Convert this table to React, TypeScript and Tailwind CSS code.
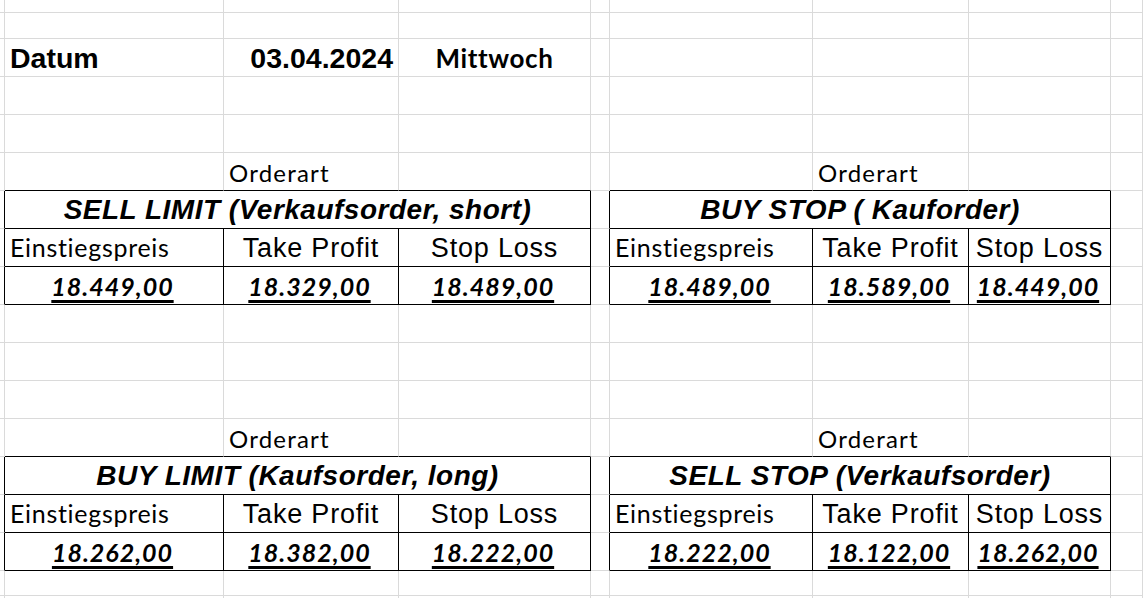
import type { ReactNode } from "react";

type Table = {
  top: number;
  left: number;
  title: string;
  values: [string, string, string];
};

const tables: Table[] = [
  { top: 6, left: 1, title: "SELL LIMIT (Verkaufsorder, short)", values: ["18.449,00", "18.329,00", "18.489,00"] },
  { top: 6, left: 5, title: "BUY STOP ( Kauforder)", values: ["18.489,00", "18.589,00", "18.449,00"] },
  { top: 13, left: 1, title: "BUY LIMIT (Kaufsorder, long)", values: ["18.262,00", "18.382,00", "18.222,00"] },
  { top: 13, left: 5, title: "SELL STOP (Verkaufsorder)", values: ["18.222,00", "18.122,00", "18.262,00"] },
];

const ROWS = 18;
const COLS = 9;

const owner = (r: number, c: number): string | null => {
  for (let i = 0; i < tables.length; i++) {
    const t = tables[i];
    if (r >= t.top && r <= t.top + 2 && c >= t.left && c <= t.left + 2) {
      return r === t.top ? `${i}-title` : `${i}-${r}-${c}`;
    }
  }
  return null;
};

const arial = "font-['Liberation_Sans',Arial,sans-serif] leading-none text-black";
const calibri = "font-['Lato','Noto_Sans',sans-serif] leading-none text-black";

const Orderart = () => (
  <span className={`${calibri} text-[24px] tracking-[1.2px] pl-[5px] pb-[5px]`}>Orderart</span>
);

// returns content and justify class for one cell
const cellContent = (r: number, c: number): { node: ReactNode; justify: string } | null => {
  if (r === 2 && c === 1)
    return {
      node: <span className={`${arial} font-bold text-[28.5px] pl-[5px] pb-[4px]`}>Datum</span>,
      justify: "justify-start",
    };
  if (r === 2 && c === 2)
    return {
      node: <span className={`${arial} font-bold text-[28.5px] pr-[5px] pb-[4px]`}>03.04.2024</span>,
      justify: "justify-end",
    };
  if (r === 2 && c === 3)
    return {
      node: <span className={`${calibri} font-bold text-[26px] tracking-[0.6px] pb-[5px]`}>Mittwoch</span>,
      justify: "justify-center",
    };
  if ((r === 5 || r === 12) && (c === 2 || c === 6)) return { node: <Orderart />, justify: "justify-start" };

  for (const t of tables) {
    if (c < t.left || c > t.left + 2) continue;
    const k = c - t.left;
    if (r === t.top && k === 0)
      return {
        node: (
          <span className={`${arial} font-bold italic text-[28px] tracking-[0.5px] pb-[4px]`}>{t.title}</span>
        ),
        justify: "justify-center",
      };
    if (r === t.top + 1) {
      if (k === 0)
        return {
          node: <span className={`${calibri} text-[25px] tracking-[0.7px] pl-[5px] pb-[6px]`}>Einstiegspreis</span>,
          justify: "justify-start",
        };
      return {
        node: (
          <span className={`${arial} text-[27px] tracking-[0.8px] pb-[4px]`}>
            {k === 1 ? "Take Profit" : "Stop Loss"}
          </span>
        ),
        justify: "justify-center",
      };
    }
    if (r === t.top + 2)
      return {
        node: (
          <span
            className={`${calibri} font-bold italic text-[25px] tracking-[1px] underline decoration-[3px] underline-offset-[4px] pr-[3px] pb-[5px]`}
          >
            {t.values[k]}
          </span>
        ),
        justify: "justify-center",
      };
  }
  return null;
};

const App = () => {
  const cells: ReactNode[] = [];

  for (let r = 0; r < ROWS; r++) {
    for (let c = 0; c < COLS; c++) {
      const o = owner(r, c);
      const isTitle = o !== null && o.endsWith("title");
      // skip cells covered by a merged title
      if (isTitle && owner(r, c - 1) === o) continue;
      const span = isTitle ? 3 : 1;
      const ro = c + span < COLS ? owner(r, c + span) : null;
      const bo = r + 1 < ROWS ? owner(r + 1, c) : null;
      const rightBlack = (o || ro) && o !== ro;
      const bottomBlack = (o || bo) && o !== bo;
      const content = cellContent(r, c);

      cells.push(
        <div
          key={`${r}-${c}`}
          className={`flex items-end overflow-visible whitespace-nowrap border-r border-b ${
            span === 3 ? "col-span-3" : ""
          } ${rightBlack ? "border-r-black" : "border-r-[#dadada]"} ${
            bottomBlack ? "border-b-black" : "border-b-[#dadada]"
          } ${content ? content.justify : ""}`}
        >
          {content?.node}
        </div>
      );
    }
  }

  return (
    <main className="w-[1143px] h-[598px] overflow-hidden bg-white">
      <div className="grid grid-cols-[5px_219px_175px_192px_19px_203px_156px_142px_1fr] grid-rows-[13px_26px_repeat(14,38px)_25px_38px]">
        {cells}
      </div>
    </main>
  );
};

export default App;
